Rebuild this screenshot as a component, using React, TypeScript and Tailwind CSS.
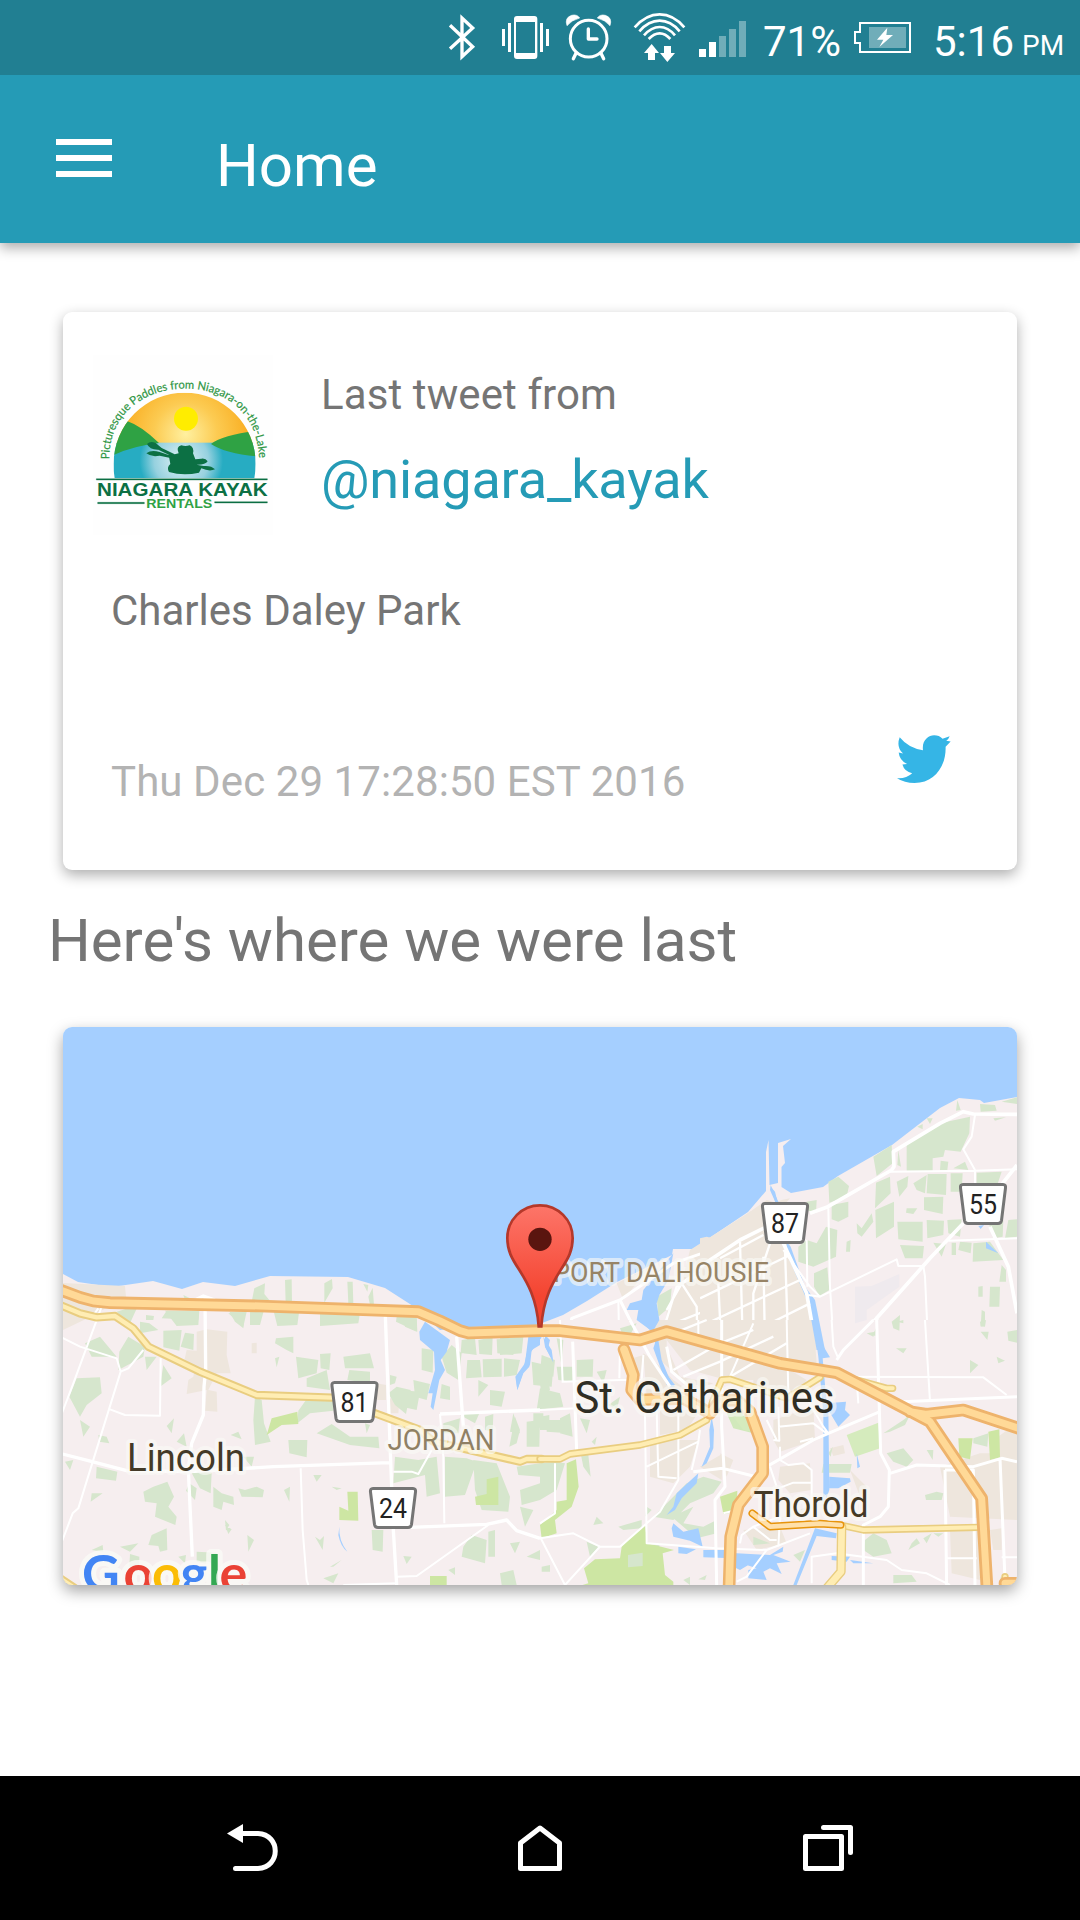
import React from 'react';

const A = 'translate(60 1290) scale(.333333)';
const B = 'translate(390 1180) scale(.333333)';
const C = 'translate(700 1020) scale(.333333)';
const D = 'translate(540 1320) scale(.333333)';

type RoadProps = { d: string; w: number; inner: number; casing?: string; fill?: string };

function Road({ d, w, inner, casing = '#eeb36c', fill = '#ffd997' }: RoadProps) {
  return (
    <g fill="none" strokeLinejoin="round" strokeLinecap="round">
      <path d={d} stroke={casing} strokeWidth={w} />
      <path d={d} stroke={fill} strokeWidth={inner} />
    </g>
  );
}

function Shield({ x, y, label }: { x: number; y: number; label: string }) {
  return (
    <g transform={`translate(${x} ${y})`}>
      <path
        d="M4 1.5H44Q47 1.500 46.500 5L42.500 37.500Q42 40.500 39 40.500H9Q6 40.500 5.500 37.500L1.500 5Q1 1.500 4 1.500Z"
        fill="#fff"
        stroke="#757575"
        strokeWidth="3"
      />
      <text x="24" y="30.500" fontSize="27.500" textAnchor="middle" fill="#222" textLength="28" lengthAdjust="spacingAndGlyphs">
        {label}
      </text>
    </g>
  );
}

function Parks() {
  return (
    <g fill="#d6e6cd">
      <g transform={A}>
        <path d="M170 65L235 45 210 100ZM315 62L418 62 415 105 350 108ZM240 95L268 100 295 120 240 130ZM310 122L365 120 358 182 310 172ZM375 128L402 132 400 180 362 170ZM205 140L255 170 250 200 175 240 178 185ZM75 160L120 140 170 200 95 200ZM255 200L290 200 260 240ZM310 225L335 265 300 290ZM50 265L120 262 125 310 80 345 60 380 28 320ZM508 65L555 65 550 115 525 95ZM570 62L612 60 600 105 570 105ZM640 60L718 60 712 105 652 108ZM780 70L900 68 895 100 780 108ZM1010 80L1070 80 1072 125 1008 95ZM648 145L700 140 700 190 680 180 645 160ZM645 205L658 200 650 232ZM708 200L775 210 770 250 715 265ZM780 192L812 190 808 240 782 235ZM850 200L930 190 942 235 855 235ZM740 265L800 240 810 300 740 290ZM868 240L930 245 930 280 862 270Z" />
        <path d="M585 320L605 330 612 400 632 455 585 465 580 390ZM715 362L745 320 818 330 820 362 750 370 712 400ZM770 430L815 402 870 440 955 440 958 475 870 465ZM685 450L742 450 740 502 688 490ZM985 310L1010 290 1052 300 1038 372 1005 345ZM915 400L930 405 920 430ZM60 390L90 410 70 440ZM115 435L140 440 148 460 118 455ZM110 530L172 545 168 572 108 565ZM15 515L40 510 30 540ZM320 408L342 385 335 430ZM350 455L372 430 380 470ZM390 540L455 548 452 610 420 595ZM512 435L535 425 545 448ZM550 500L582 500 575 530ZM95 610L128 610 92 635ZM280 590L322 575 342 620 325 650 350 680 346 705 285 680 290 640 255 635 250 605ZM388 580L410 595 405 630 378 602ZM460 590L485 610 520 620 522 645 490 635 485 660 460 650ZM535 595L555 600 590 590 612 600 608 622 545 620ZM672 600L690 590 688 635ZM760 555L785 555 770 575ZM815 590L845 595 830 600ZM495 705L515 718 505 732ZM562 735L582 750 565 785ZM275 735L320 715 322 780 300 785 295 768 265 765ZM765 740L780 750 792 738 788 780ZM935 720L970 720 968 785 938 780ZM1030 798L1055 800 1040 822ZM95 780L128 765 130 785ZM180 770L235 760 210 785ZM355 800L378 795 375 820ZM410 785L470 788 475 830 410 815ZM810 830L845 810 820 830ZM790 865L835 850 820 880ZM495 690L508 705 498 722ZM210 792L238 800 238 840 208 830Z" />
        <path d="M1085 175L1120 180 1118 248 1085 240ZM1145 200L1175 165 1205 190 1195 270 1160 248ZM1215 150L1245 145 1250 195 1212 190ZM1255 150L1298 142 1296 195 1258 192ZM1310 148L1370 145 1360 195 1312 190ZM1222 210L1260 210 1265 262 1218 265ZM1268 208L1325 206 1325 260 1270 262ZM1332 205L1380 210 1370 255 1332 260ZM1060 270L1110 282 1100 330 1065 320ZM1145 282L1170 290 1170 330 1140 325ZM1255 270L1285 285 1255 320ZM1150 400L1200 385 1195 430 1148 430ZM1200 375L1260 365 1245 400ZM1275 380L1300 372 1298 425 1275 420ZM1365 380L1380 420 1370 460 1348 470ZM1400 395L1440 390 1438 470 1400 470ZM1005 500L1075 510 1130 500 1140 610 1100 620 1095 555 1000 580ZM1155 500L1220 505 1250 515 1215 615 1155 620ZM1240 510L1310 520 1350 620 1345 665 1265 660 1245 600ZM1370 530L1440 520 1440 560 1375 555ZM1380 600L1440 580 1440 630 1385 645ZM1380 650L1420 660 1395 710ZM1210 770L1235 735 1280 750 1275 820 1205 800ZM1285 725L1305 720 1305 800 1285 800ZM1350 760L1380 755 1365 790ZM1400 800L1440 780 1440 810ZM1320 850L1360 840 1370 885 1325 885ZM1165 840L1185 832 1185 855Z" />
      </g>
      <g transform={B}>
        <path d="M40 415L80 415 80 455 45 440ZM215 480L250 475 255 520 212 520ZM330 475L400 470 395 520 330 525ZM425 545L490 560 485 620 430 615ZM500 475L520 480 515 560ZM560 540L610 538 608 590 560 590ZM620 575L650 570 640 610ZM690 445L740 430 720 465 700 470ZM800 350L845 325 840 380 805 410ZM30 630L90 635 80 690 35 680ZM300 630L345 635 335 680 300 675ZM450 625L510 640 520 680 440 690ZM370 700L390 760 360 755ZM570 715L600 720 590 760ZM655 675L690 650 680 690ZM0 585L20 590 15 610 0 615ZM430 700L460 700 460 745 430 740Z" />
      </g>
      <g transform={C}>
        <path d="M520 410L575 375 578 430 530 468ZM385 485L415 470 447 498 440 530 388 548ZM620 375L720 310 810 290 808 340 782 395 735 390 730 410 698 415 698 452 620 452ZM772 240L782 270 768 272ZM840 252L885 255 890 272 842 275ZM905 245L951 232V252ZM652 320L668 312 668 328ZM680 295L698 295 690 312ZM880 295L918 292 885 302ZM595 390L603 440 592 435ZM722 422L745 425 742 450 720 450ZM760 445L795 425 805 450ZM528 488L570 470 572 520 525 565ZM590 485L625 468 622 500 598 530ZM640 490L680 465 675 520 650 510ZM683 462L740 462 738 525 680 520ZM752 460L788 460 785 515 752 515ZM830 458L905 455 890 500 830 490ZM672 532L730 530 728 582 672 570ZM526 570L582 545 582 620 528 655ZM620 565L652 565 640 582 618 578ZM592 605L668 605 668 665 595 658ZM680 600L732 602 730 645 682 655ZM742 600L785 598 780 650 745 640ZM865 605L910 600 908 650 880 655ZM925 600L951 598V650L915 655ZM755 668L768 668 768 705 755 705ZM780 665L815 668 812 700 775 690ZM600 675L672 678 668 715 615 715ZM820 670L870 665 910 720 818 725ZM700 668L738 672 725 710ZM470 610L485 625 515 580 520 605 485 650 472 640ZM440 665L452 660 450 695 438 695ZM320 545L350 540 348 580 320 570ZM395 555L445 545 445 590 415 605 395 598ZM295 680L320 660 350 670 378 620 412 630 408 710 340 740 295 725ZM342 760L382 742 388 810 358 828 342 800ZM905 735L918 750 918 785 898 785ZM870 800L900 800 898 860 868 860ZM835 800L848 798 848 830 835 830ZM845 870L855 875 855 918 842 920ZM842 935L866 935 862 960ZM922 935L951 930V968L925 962ZM575 905L600 885 598 932 580 925ZM518 945L528 925 526 948Z" />
      </g>
      <g transform={D}>
        <path d="M5 105L45 120 40 170 0 160ZM0 190L25 180 30 210 5 230ZM50 140L98 140 98 185 55 180ZM0 290L28 285 28 330 0 330ZM60 295L90 280 98 350 60 340ZM0 430L45 425 75 430 50 510 0 540ZM120 390L145 405 152 470 130 440ZM20 300L80 300 88 340 20 335ZM155 365L170 350 165 375ZM1040 400L1090 385 1120 420 1100 440 1060 425ZM1030 340L1090 300 1110 285 1095 315 1050 335ZM1160 390L1180 390 1178 420ZM1320 5L1338 0 1335 20 1322 18ZM1290 120L1315 135 1290 160ZM1370 110L1395 122 1375 130ZM1068 85L1100 85 1090 100ZM1300 355L1345 340 1342 380 1300 370ZM1070 5L1090 0 1090 10ZM980 40L1005 35 1000 50ZM850 432L935 432 930 458 845 458ZM865 400L878 380 872 410ZM1155 525L1190 515 1210 520 1205 540 1158 540ZM440 490L490 470 545 485 520 520 450 550 400 600 340 590 400 530ZM395 590L460 560 430 610 490 620 530 600 530 640 470 655ZM300 680L360 670 355 690ZM975 660L1000 640 1040 660 1055 700 1000 710 970 690ZM1115 670L1130 655 1140 670 1105 690ZM1150 655L1175 640 1160 670ZM5 740L30 735 30 755 5 755ZM140 665L175 680 150 710ZM320 560L335 570 315 590ZM640 650L690 670 640 675ZM495 780L500 765 475 778ZM760 705L795 690 780 725ZM1060 765L1115 765 1130 785 1060 790ZM1180 640L1210 640 1195 650ZM1382 795L1382 770 1400 780ZM430 780L450 770 450 795ZM170 590L190 610 160 615ZM235 620L305 600 305 625 250 630Z" />
      </g>
    </g>
  );
}

function Urban() {
  return (
    <g fill="#eee6dd">
      <path d="M63 1283L125 1286 126 1297 88 1318 63 1330Z" />
      <g transform={A}>
        <path d="M410 125L440 118 502 125 500 195 512 250 470 250 445 300 470 305 472 365 435 362 440 300 380 312 385 270 400 260 405 230 370 225 380 180 410 182ZM575 160L590 158 590 190 575 190ZM950 280L978 285 978 330 950 330ZM990 325L1018 332 1015 370 990 370Z" />
      </g>
      <g transform={B}>
        <path d="M680 310L840 230 780 260 700 360ZM900 210L1080 95 1130 60 1200 80V600L1010 600 900 570 830 480 830 390 880 310 880 290ZM760 520L790 540 850 600 920 650 770 650Z" />
      </g>
      <g transform={C}>
        <path d="M0 655L20 650 80 665 85 630 150 575 245 540 270 535 240 570 190 610 260 690 340 850 350 990 0 985Z" />
      </g>
      <g transform={D}>
        <path d="M325 0L640 0 820 0 830 130 720 130 380 30 380 80 420 170 520 190 460 210 360 120ZM640 150L750 150 800 180 750 250 640 200ZM700 300L820 260 825 360 720 395 700 360ZM330 360L475 360 450 440 400 490 330 470ZM360 270L480 270 440 330 360 345ZM720 440L810 430 815 510 750 520 715 480ZM610 630L720 620 740 670 650 690ZM1200 440L1320 400 1431 400V600L1230 590ZM1230 630L1320 630V780L1235 760ZM1350 630L1385 625 1385 690 1360 690ZM1360 360L1431 310V400L1350 430ZM870 385L910 375 915 400 880 408ZM540 400L580 420 560 470ZM260 120L310 105 300 170ZM480 440L550 400 545 480ZM720 595L800 560 790 580ZM390 340L410 350 340 360ZM930 450L980 500 960 530Z" />
      </g>
      <g transform={C} fill="#efeaee">
        <path d="M465 800L515 798 598 762 598 800 500 870 500 900 465 910Z" />
      </g>
    </g>
  );
}

function BrightParks() {
  return (
    <g fill="#cde6a3">
      <g transform={A}>
        <path d="M635 385L712 365 715 402 665 405 620 435ZM1245 620L1280 612 1280 568 1315 560 1315 645 1248 645ZM862 605L893 605 895 692 838 690 838 650 865 662ZM1110 858L1160 858 1160 885 1110 885Z" />
      </g>
      <g transform={B}>
        <path d="M1010 700L1060 690 1090 760 1030 745Z" fill="#d1e9bb" />
      </g>
      <g transform={D}>
        <path d="M80 430L108 418 116 500 95 560 45 600 50 640 5 655 0 615 50 570 50 545 80 540ZM245 680L305 620 315 615 322 670 402 690 368 700 375 765 400 785 400 800 110 800 145 790 132 745 165 718 240 715ZM1255 355L1298 355 1290 418 1258 410ZM1345 335L1378 328 1380 412 1350 420ZM540 530L592 512 590 575 550 582Z" />
        <path d="M920 345L1015 308 1020 385 945 410ZM580 290L640 290 660 340 610 330Z" fill="#d5ebbd" />
        <path d="M264 705L308 698V738L264 742Z" fill="#d6e6cd" />
      </g>
    </g>
  );
}

function Water() {
  return (
    <g fill="#a5cfff">
      <g transform={A}>
        <path d="M1095 95L1170 150 1160 185 1142 210 1155 240 1138 270 1120 360 1112 350 1118 310 1105 310 1125 240 1122 185 1080 150 1078 125ZM1405 140L1440 138V165L1415 180 1410 225 1390 245 1372 300 1366 260 1395 220Z" />
        <path d="M838 710Q835 750 862 785 842 770 835 735Z" />
      </g>
      <g transform={B}>
        <path d="M430 468L455 472 420 520 418 560 400 580 382 630 378 595 400 565 415 500ZM465 465L480 480 475 500 490 548 465 500ZM760 330L850 220 835 300 808 345 800 370 808 420 788 455 740 420 745 390 710 390 720 370 755 360ZM788 455L805 480 815 540 840 600 855 620 840 620 810 550Z" />
        <path d="M1142 15L1165 65 1160 75 1140 30Z" />
      </g>
      <g transform={C}>
        <path d="M212 500L225 515 240 575 230 560ZM260 665L272 680 315 800 345 840 375 990 350 990 325 850 260 700ZM858 665L895 700 858 685ZM835 618L852 615 842 627Z" />
      </g>
      <g transform={D}>
        <path d="M300 0L345 0 330 30ZM348 60L355 90 370 150 405 195 380 195 340 85ZM820 0L835 0 848 75 870 112 848 115 860 250 918 245 915 270 930 285 895 320 865 270 868 510 850 560 850 280 835 110ZM950 400L960 440 952 445ZM868 470L930 475 932 485 895 505 868 505ZM515 290L522 330 520 385 500 430 485 440 510 380 508 330ZM475 460L470 490 425 535 405 570 380 585 400 560 410 520ZM400 610L430 635 475 625 488 680 450 662 400 650 395 625ZM415 680L468 688 440 702 415 700ZM490 690L555 690 590 700 690 705 730 680 728 695 700 705 752 725 710 730 725 762 690 745 670 755 680 780 625 775 625 750 650 745 590 725 580 715 490 712ZM825 625L890 640 888 655 830 648 770 795 760 795ZM875 708L930 710 920 725 875 720ZM930 720L1000 730 940 730ZM590 710L650 720 600 750 580 740ZM10 50L35 90 40 125 15 80Z" />
      </g>
    </g>
  );
}

function Streets() {
  return (
    <g fill="none" stroke="#fff" strokeLinejoin="round">
      <defs>
        <clipPath id="harbour">
          <path d="M450 0H930V420H450Z" />
        </clipPath>
        <clipPath id="northeast">
          <path d="M0 0H990V900H0Z" />
        </clipPath>
      </defs>
      <g transform={A} strokeWidth="7">
        <path d="M125 50L40 280 0 385M0 140L60 170 170 205 182 245 75 590 55 655 38 670 0 770M182 245L205 235 250 180M150 358L195 375 300 377 302 205M722 535L728 720 740 870 745 885M1000 545L1055 545 1075 552 1115 480M1285 705L1070 858 1010 860M850 885L1010 880M1140 372L1150 500 1153 700M115 55L100 75" strokeWidth="6" />
        <path d="M435 20L437 240 432 290 430 375 395 460 385 540 397 800M0 490L85 512 200 542 390 545 640 530 990 518M975 50L990 460 1000 720 1010 885M1190 140L1210 410M1140 372L1440 360M1050 712L1280 703 1340 690 1370 722 1440 745M405 30L430 18 465 30" strokeWidth="10" />
      </g>
      <g transform={B}>
        <g clipPath="url(#harbour)">
          <path d="M690 360L545 415 542 440M690 360L850 250 1050 180 1150 140M690 360L740 460" strokeWidth="9" />
          <path d="M685 360L690 600" strokeWidth="6" />
          <path d="M830 390L875 310 920 380 925 600M875 310L1100 200 1120 160M980 240L990 360 995 600M840 435L1200 290M820 450L860 320 1110 140" strokeWidth="7" />
        </g>
      </g>
      <g transform={C}>
        <g clipPath="url(#northeast)">
          <path d="M0 740L120 660 200 620M330 580L380 562 575 450 582 440 580 395 720 310 790 275 820 282 951 283M430 990L525 900 690 715 790 610M870 620L925 740 951 880M530 890L535 990M900 500L951 435M250 670L320 820 350 990" strokeWidth="11" />
          <path d="M570 455L825 452 951 448M825 450L825 490M825 285L815 350 790 388 825 450M320 660L322 800M385 565L390 800 402 990M360 830L590 718 595 738 670 738 675 770 685 990M745 662L951 655M250 690L330 800 360 830 325 825" strokeWidth="6" />
          <path d="M0 920L300 780M60 985L330 850M0 835L270 705M60 715L190 645M210 670L160 820 160 910 130 980M55 790L63 960M120 665L128 960M190 710L195 980M255 690L265 985" strokeWidth="7" />
        </g>
      </g>
      <g transform={D} strokeWidth="9">
        <path d="M98 65L110 395M270 0L330 110 390 200M380 80L395 155 460 210M545 0L545 320 555 500 525 540 530 795M1010 0L1022 400 1048 450 1045 560 1020 590 970 615 970 795M865 340L820 360 680 440M865 340L1020 275M460 455L548 445 640 468M1050 460L1130 435 1300 440 1385 415 1431 425M1380 415L1395 780M1215 450L1220 800M1215 450L1300 450 1305 795M1085 245L1431 230M1000 0L910 90 890 120" />
        <path d="M415 230L415 480 360 575 240 680 180 680 100 640 0 655M180 680L75 795 0 650M45 430L45 580 0 610M890 170L1330 172 1400 225M0 270L110 265M65 185L245 180 305 180 310 105M60 0L68 185M240 80L238 175M875 0L880 80 895 115M1155 0L1170 245M315 280L320 670 530 685M350 270L355 470 410 475M320 440L475 365 480 330M455 450L475 365M700 360L718 362 715 260M715 320L820 310 860 340M680 300L710 360M690 440L710 500M720 380L720 420 745 435 790 430 815 450 815 590M715 505L760 488 815 488M600 670L605 645 640 620 720 590M640 620L690 660 710 660M530 685L680 690 810 640M680 690L620 770 590 785M815 790L815 710 890 700 1040 720 1085 750 1160 760 1230 795M1220 715L1310 715M1385 712L1431 712M780 365L820 355M550 580L590 570M780 200L850 320 865 340M740 0L745 220M640 10L570 170M720 590L715 680M950 180L955 250M475 0L475 60" strokeWidth="6" />
        <path d="M400 40L500 0M400 150L540 70 640 30M430 170L540 125 700 50M570 170L740 70" strokeWidth="7" />
      </g>
    </g>
  );
}

function YellowRoads() {
  const c = { casing: '#e9cd80', fill: '#ffedb3' };
  return (
    <>
      <g transform={A}>
        <Road d="M0 45L60 70 110 82 165 78 220 115 265 170 420 245 590 315 815 323M940 368L1080 420 1120 455 1380 515 1400 507 1445 507M0 865L45 895" w={25} inner={13} {...c} />
      </g>
      <g transform={D}>
        <Road d="M0 417L60 417 90 402 300 375 420 345 500 300 520 240 545 180 570 178 740 235 840 172M950 180L1040 205 1058 205M900 615L970 630 1315 622M1395 770L1395 800" w={22} inner={12} {...c} />
        <Road d="M905 620L903 755 860 805" w={28} inner={20} {...c} />
      </g>
    </>
  );
}

function Highways() {
  return (
    <g transform={D}>
      <Road d="M252 88L280 165 275 210 300 240 430 235 510 280 540 242 590 240 630 275 668 380 668 460 595 555 572 650 567 810" w={38} inner={23} />
      <Road
        d="M-1440 -90L-1380 -68 -1340 -57 -1290 -52 -840 -42 -365 -25 -300 3 -240 32 -215 39 0 32 60 32 300 60 380 35 720 130 890 158 1170 305 1325 535 1342 820M1110 275L1160 283 1270 270 1445 328M1395 790L1440 790"
        w={38}
        inner={21}
      />
      <Road d="M637 580L690 620 840 611 902 615" w={23} inner={14} casing="#e7940c" fill="#ffe0aa" />
    </g>
  );
}

function MapLabels() {
  return (
    <g fontFamily="Roboto, sans-serif" stroke="#fafaf6" strokeOpacity=".65" strokeWidth="8" strokeLinejoin="round" paintOrder="stroke">
      <text x="127" y="1470.500" fontSize="38" fill="#443a27" textLength="118" lengthAdjust="spacingAndGlyphs">Lincoln</text>
      <text x="387.500" y="1450" fontSize="29" fill="#8f8064" textLength="107" lengthAdjust="spacingAndGlyphs">JORDAN</text>
      <text x="553" y="1281.500" fontSize="28.500" fill="#978466" textLength="216" lengthAdjust="spacingAndGlyphs">PORT DALHOUSIE</text>
      <text x="574.500" y="1413" fontSize="44" fill="#302e24" textLength="260" lengthAdjust="spacingAndGlyphs">St. Catharines</text>
      <text x="753.500" y="1517" fontSize="36" fill="#453a26" textLength="115" lengthAdjust="spacingAndGlyphs">Thorold</text>
    </g>
  );
}

function GoogleMark() {
  return (
    <text y="1592" fontFamily="Lato, sans-serif" fontSize="52" fontWeight="700" stroke="#fafaf6" strokeWidth="10" strokeOpacity=".8" strokeLinejoin="round" paintOrder="stroke">
      <tspan x="82" fill="#4285f4">G</tspan>
      <tspan x="123.500" fill="#ea4335">o</tspan>
      <tspan x="152" fill="#fbbc05">o</tspan>
      <tspan x="180.500" fill="#4285f4">g</tspan>
      <tspan x="208" fill="#34a853">l</tspan>
      <tspan x="219.500" fill="#ea4335">e</tspan>
    </text>
  );
}

function Pin() {
  return (
    <g transform={B}>
      <defs>
        <linearGradient id="pin" x1="0" y1="0" x2="0" y2="1">
          <stop offset="0" stopColor="#fd7569" />
          <stop offset=".75" stopColor="#f44531" />
        </linearGradient>
      </defs>
      <path
        d="M446 439C440 355 412 308 388 270C365 235 352 212 352 174A98 98 0 0 1 548 174C548 212 535 235 512 270C488 308 460 355 454 439Z"
        fill="url(#pin)"
        stroke="#b5382a"
        strokeWidth="8"
      />
      <circle cx="450" cy="178" r="35" fill="#5a150f" />
    </g>
  );
}

function MapView() {
  return (
    <svg className="block h-full w-full" viewBox="63 1027 954 558" fontFamily="Roboto, sans-serif">
      <rect x="63" y="1027" width="954" height="558" fill="#a5cfff" />
      <path
        d="M63 1274L78 1282 112 1287 153 1281 182 1289 203 1282 235 1286 270 1276 348 1277 385 1288 413 1306 440 1330 470 1327 537 1325 563 1315 587 1301 617 1282 672 1255 673 1249 693 1249 748 1212 766 1191V1152L768.500 1140 769.500 1185 778 1183V1143L791 1139 783 1146 785 1163 781.500 1167V1187L791 1193 823 1187 838 1176 892 1145 940 1108 959 1098 980 1100 984 1103 1017 1097V1585H63Z"
        fill="#f6eeef"
      />
      <Urban />
      <path transform="translate(60 1020) scale(.333333)" fill="#d6e6cd" d="M583 805L615 790 613 822 628 840 610 850 575 845ZM675 780L695 778 696 850 677 850ZM793 790L816 777 818 805 793 848ZM862 785L878 785 880 850 865 850ZM910 792L925 795 922 815ZM925 830L938 803 942 855 930 855ZM370 825L390 835 375 840ZM320 872L415 875 415 900 305 895ZM505 880L560 875 550 920ZM258 885L282 888 280 900 258 900Z" />
      <Parks />
      <BrightParks />
      <Water />
      <Streets />
      <YellowRoads />
      <Highways />
      <MapLabels />
      <Shield x={330.5} y={1381} label="81" />
      <Shield x={369} y={1487} label="24" />
      <Shield x={761} y={1202} label="87" />
      <Shield x={959} y={1183} label="55" />
      <Pin />
      <GoogleMark />
    </svg>
  );
}

function KayakLogo() {
  return (
    <svg className="block h-[180px] w-[180px]" viewBox="130 163 540 540">
      <defs>
        <radialGradient id="sky" gradientUnits="userSpaceOnUse" cx="408" cy="400" r="210">
          <stop offset="0" stopColor="#fff0a0" />
          <stop offset=".45" stopColor="#fccb52" />
          <stop offset="1" stopColor="#f9a818" />
        </radialGradient>
        <radialGradient id="lake" gradientUnits="userSpaceOnUse" cx="395" cy="480" r="125">
          <stop offset="0" stopColor="#e2f2f6" />
          <stop offset=".65" stopColor="#96d1df" />
          <stop offset="1" stopColor="#27acc2" />
        </radialGradient>
        <clipPath id="dome">
          <path d="M195 533Q191 510 192 489A213 213 0 0 1 618 489Q618 512 614 533Z" />
        </clipPath>
        <path id="arc" d="M179 476C176 350 275 264 405 264C540 264 632 350 628 492" />
      </defs>
      <rect x="130" y="163" width="540" height="540" fill="#fefefe" />
      <g clipPath="url(#dome)">
        <rect x="180" y="270" width="450" height="160" fill="url(#sky)" />
        <rect x="180" y="426" width="450" height="110" fill="url(#lake)" />
        <path d="M180 360H230Q275 375 328 427Q250 435 180 468ZM630 390Q520 402 484 430Q530 460 630 468Z" fill="#2fa244" />
      </g>
      <circle cx="409" cy="354" r="36" fill="#ffed00" />
      <g fill="#0c7044">
        <path d="M292 430Q302 420 318 427L336 442 375 461 387 458Q378 438 395 434 407 438 420 434 434 440 430 458L437 476 455 474Q468 472 474 482 467 493 440 492L462 496Q485 494 496 506 480 514 455 503L448 516Q400 526 358 514 350 500 362 490L357 462 326 447Q300 448 292 430Z" />
        <path d="M290 458Q305 446 330 454L366 466V473L330 465Q305 470 290 458Z" />
        <path d="M140 534H653V538H140ZM144 605H284V609H144ZM495 603H653V607H495Z" stroke="#0c7044" />
      </g>
      <text fill="#2e9644" fontFamily="Lato, sans-serif" fontSize="35" fontWeight="400" stroke="#2e9644" strokeWidth=".6">
        <textPath href="#arc" textLength="690" lengthAdjust="spacingAndGlyphs">Picturesque Paddles from Niagara-on-the-Lake</textPath>
      </text>
      <text x="142" y="587" fontFamily="'Liberation Sans', sans-serif" fontWeight="700" fontSize="53" fill="#0c7044" textLength="512" lengthAdjust="spacingAndGlyphs">NIAGARA KAYAK</text>
      <text x="290" y="621" fontFamily="'Liberation Sans', sans-serif" fontWeight="700" fontSize="36" fill="#2fa244" textLength="198" lengthAdjust="spacingAndGlyphs">RENTALS</text>
    </svg>
  );
}

function StatusBar() {
  return (
    <div className="relative z-10 flex h-[75px] shrink-0 items-center bg-[#217f92] pl-[447px] text-[42px] leading-none text-white">
      <svg className="h-[75px] w-[31px] shrink-0" viewBox="51 0 93 225" fill="none" stroke="#fff">
        <path d="M60 76L128 140 96 170V54L128 84 60 146" strokeWidth="10" />
      </svg>
      <svg className="ml-[22px] h-[75px] w-[51px] shrink-0" viewBox="210 0 153 225" fill="#fff">
        <path fillRule="evenodd" d="M261 48H313Q322 48 322 57V168Q322 177 313 177H261Q252 177 252 168V57Q252 48 261 48ZM258 66V159H315V66Z" />
        <path d="M216 87H225V138H216ZM234 69H243V156H234ZM330 69H339V156H330ZM348 87H357V138H348Z" />
      </svg>
      <svg className="ml-[13px] h-[75px] w-[49px] shrink-0" viewBox="402 0 147 225" fill="none" stroke="#fff">
        <circle cx="476" cy="116" r="55" strokeWidth="9" />
        <path d="M475 87V117H501" strokeWidth="10" strokeLinecap="round" strokeLinejoin="round" />
        <path d="M438 160L430 176M513 160L521 176" strokeWidth="10" strokeLinecap="round" />
        <path d="M411 77Q403 53 425 46Q441 42 449 54Q425 60 411 77ZM540 77Q548 53 526 46Q510 42 502 54Q526 60 540 77Z" fill="#fff" strokeWidth="2" />
      </svg>
      <svg className="ml-[19px] h-[75px] w-[56px] shrink-0" viewBox="606 0 168 225" fill="none" stroke="#fff" strokeWidth="8">
        <path d="M614 82Q648 43 689 43Q730 43 763 82M628 94Q656 62 689 62Q722 62 749 94M642 106Q664 81 689 81Q714 81 735 106M656 117Q672 100 689 100Q706 100 721 117" />
        <path d="M665 132L687 159H675V180H654V159H642ZM712 186L690 159H702V138H723V159H735Z" fill="#fff" stroke="none" />
      </svg>
      <svg className="ml-[9px] h-[75px] w-[50px] shrink-0" viewBox="801 0 150 225" fill="#fff">
        <path d="M807 147H828V171H807ZM837 126H858V171H837Z" />
        <path d="M867 108H888V171H867ZM897 87H918V171H897ZM927 63H948V171H927Z" fill="#70adb9" />
      </svg>
      <span className="ml-[16px] w-[89px] shrink-0 pt-[9px]">71%</span>
      <svg className="h-[75px] w-[61px] shrink-0" viewBox="306 0 183 225">
        <path d="M330 69H480V156H330V129H315V96H330Z" fill="none" stroke="#fff" strokeWidth="6" />
        <path d="M357 81H468V144H357Z" fill="#70adb9" />
        <path d="M412 83L381 119H400L388 141L429 105H409Z" fill="#fff" />
      </svg>
      <span className="ml-[20px] w-[89px] shrink-0 pt-[9px]">5:16</span>
      <span className="shrink-0 pt-[17px] text-[28px]">PM</span>
    </div>
  );
}

function NavBar() {
  return (
    <nav className="flex h-[144px] shrink-0 items-center bg-black">
      <button className="ml-[220px] h-[70px] w-[66px]" aria-label="Back">
        <svg className="block h-full w-full" viewBox="220 1813 66 70" fill="none" stroke="#fff" strokeWidth="5" strokeLinecap="round">
          <path d="M242 1833.500H258C281 1834.500 281 1867.500 258 1868.500H235.500" />
          <path d="M227 1833.500L243 1824V1843Z" fill="#fff" stroke="none" />
        </svg>
      </button>
      <button className="ml-[221px] h-[70px] w-[66px]" aria-label="Home">
        <svg className="block h-full w-full" viewBox="507 1813 66 70" fill="none" stroke="#fff" strokeWidth="5" strokeLinejoin="round">
          <path d="M540 1828L559.500 1843V1868.500H520.500V1843Z" />
        </svg>
      </button>
      <button className="ml-[222px] h-[70px] w-[66px]" aria-label="Recent apps">
        <svg className="block h-full w-full" viewBox="795 1813 66 70" fill="none" stroke="#fff" strokeWidth="5" strokeLinejoin="round" strokeLinecap="round">
          <path d="M805.500 1836.500H841.500V1868.500H805.500ZM823.500 1827.500H850.500V1852.500" />
        </svg>
      </button>
    </nav>
  );
}

export default function App() {
  return (
    <div className="flex h-[1920px] w-[1080px] flex-col overflow-hidden bg-white font-['Roboto',sans-serif]">
      <StatusBar />
      <header className="relative flex h-[168px] shrink-0 items-start bg-[#259bb6] text-white shadow-[0_5px_12px_rgba(0,0,0,0.32)]">
        <button className="mt-[64px] ml-[56px] flex w-[56px] flex-col gap-[10px]" aria-label="Menu">
          <span className="h-[6px] w-full bg-white" />
          <span className="h-[6px] w-full bg-white" />
          <span className="h-[6px] w-full bg-white" />
        </button>
        <h1 className="mt-[61px] ml-[104px] text-[60px] leading-[60px]">Home</h1>
      </header>
      <main className="flex flex-1 flex-col px-[63px] pt-[69px] text-[#757575]">
        <section className="flex h-[558px] shrink-0 flex-col rounded-[9px] bg-white shadow-[0_5px_14px_rgba(0,0,0,0.32)]">
          <div className="flex">
            <div className="mt-[43px] ml-[30px]">
              <KayakLogo />
            </div>
            <div className="ml-[48px] pt-[62px]">
              <p className="text-[42px] leading-[42px] tracking-[0.1px]">Last tweet from</p>
              <p className="mt-[37px] text-[54px] leading-[54px] tracking-[-0.15px] text-[#259bb6]">@niagara_kayak</p>
            </div>
          </div>
          <p className="mt-[55px] ml-[48px] text-[42px] leading-[42px]">Charles Daley Park</p>
          <div className="mt-[103px] ml-[48px] flex items-start justify-between pr-[66px]">
            <time className="mt-[26px] text-[42px] leading-[42px] tracking-[0.09px] text-[#b3b3b3]">Thu Dec 29 17:28:50 EST 2016</time>
            <svg className="h-[48px] w-[54px]" viewBox="113 104 160 142" preserveAspectRatio="none">
              <path fill="#35b5e6" d="M121 111Q148 144 190 149C186 120 206 105 223 105Q238 105 248 115L269 108Q266 117 259 121L272 123 257 139C259 195 225 246 165 246Q135 246 113 232Q140 234 158 217Q135 212 129 191L143 190Q120 179 118 156L131 159Q110 140 121 111Z" />
            </svg>
          </div>
        </section>
        <h2 className="mt-[41px] -ml-[15px] text-[60px] leading-[60px]">Here's where we were last</h2>
        <section className="mt-[56px] h-[558px] shrink-0 overflow-hidden rounded-[9px] shadow-[0_6px_15px_rgba(0,0,0,0.36)]">
          <MapView />
        </section>
      </main>
      <NavBar />
    </div>
  );
}
